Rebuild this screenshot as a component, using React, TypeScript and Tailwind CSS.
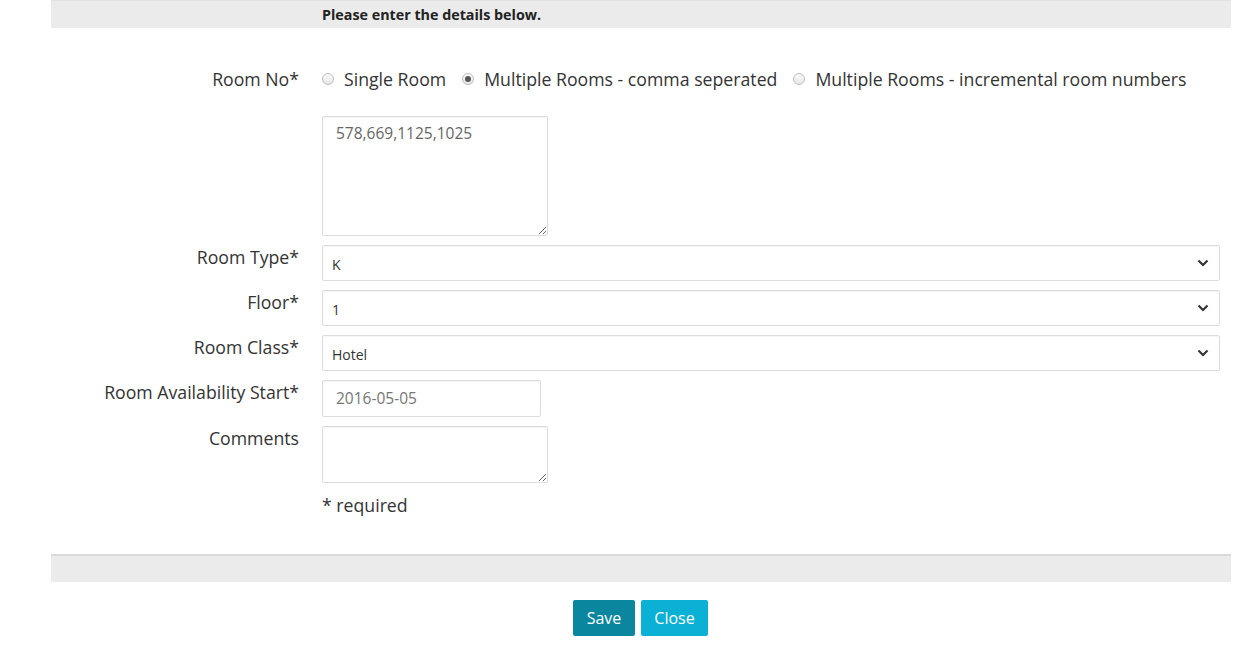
import React from 'react';

const font = { fontFamily: '"Open Sans", "Noto Sans", sans-serif' };

function Radio({ checked, label }: { checked?: boolean; label: string }) {
    return (
        <label className="flex items-center gap-[10px]">
            <span className="flex h-[12px] w-[12px] items-center justify-center rounded-full border border-[#bdbdbd] bg-[linear-gradient(#fbfbfb,#e6e6e6)]">
                {checked && <span className="h-[6px] w-[6px] rounded-full bg-[#555]" />}
            </span>
            <span>{label}</span>
        </label>
    );
}

function Row({ label, children }: { label?: string; children: React.ReactNode }) {
    return (
        <div className="flex gap-[23px]">
            <div className="w-[248px] shrink-0 text-right leading-[24px]">{label}</div>
            <div className="flex-1">{children}</div>
        </div>
    );
}

function Select({ value }: { value: string }) {
    return (
        <div className="flex h-[36px] w-[898px] items-center justify-between rounded-[2px] border border-[#dcdcdc] bg-white pr-[10px] pl-[9px] pt-[2px] text-[14px] text-[#333] shadow-[inset_0_1px_1px_rgba(0,0,0,0.04)]">
            <span>{value}</span>
            <svg width="12" height="8" viewBox="0 0 12 8" className="mb-[2px]">
                <path d="M1.5 1.5 L6 6 L10.5 1.5" fill="none" stroke="#333" strokeWidth="2.2" />
            </svg>
        </div>
    );
}

export default function App() {
    return (
        <div className="min-h-[645px] w-full bg-white text-[17.7px] text-[#333]" style={font}>
            <div className="ml-[51px] flex h-[28px] w-[1180px] items-center border-t border-[#e2e2e2] bg-[#ebebeb] pl-[271px] text-[14.3px] font-bold text-[#222]">
                Please enter the details below.
            </div>

            <div className="ml-[51px] flex w-[1180px] flex-col pt-[39px]">
                <Row label="Room No*">
                    <div className="flex items-center gap-[16px] leading-[24px]">
                        <Radio label="Single Room" />
                        <Radio checked label="Multiple Rooms - comma seperated" />
                        <Radio label="Multiple Rooms - incremental room numbers" />
                    </div>
                </Row>

                <div className="mt-[25px] flex flex-col gap-[9px]">
                    <Row>
                        <textarea
                            readOnly
                            defaultValue="578,669,1125,1025"
                            className="block h-[120px] w-[226px] rounded-[2px] border border-[#dcdcdc] px-[13px] py-[5px] text-[15.5px] text-[#666] shadow-[inset_0_1px_1px_rgba(0,0,0,0.04)] outline-none"
                        />
                    </Row>
                    <Row label="Room Type*">
                        <Select value="K" />
                    </Row>
                    <Row label="Floor*">
                        <Select value="1" />
                    </Row>
                    <Row label="Room Class*">
                        <Select value="Hotel" />
                    </Row>
                    <Row label="Room Availability Start*">
                        <div className="flex h-[37px] w-[219px] items-center rounded-[2px] border border-[#dcdcdc] px-[13px] text-[15.5px] text-[#777] shadow-[inset_0_1px_1px_rgba(0,0,0,0.04)]">
                            2016-05-05
                        </div>
                    </Row>
                    <Row label="Comments">
                        <textarea
                            readOnly
                            className="block h-[57px] w-[226px] rounded-[2px] border border-[#dcdcdc] px-[13px] py-[5px] text-[15px] shadow-[inset_0_1px_1px_rgba(0,0,0,0.04)] outline-none"
                        />
                    </Row>
                    <Row>
                        <span className="leading-[24px]">* required</span>
                    </Row>
                </div>
            </div>

            <div className="mt-[35px] ml-[51px] h-[28px] w-[1180px] border-t-2 border-[#dadada] bg-[#ebebeb]" />

            <div className="mt-[18px] flex justify-center gap-[6px] pl-[26px]">
                <button className="h-[36px] w-[62px] rounded-[2px] bg-[#0a879e] text-[16px] text-white">Save</button>
                <button className="h-[36px] w-[67px] rounded-[2px] bg-[#0ab1d4] text-[16px] text-white">Close</button>
            </div>
        </div>
    );
}
